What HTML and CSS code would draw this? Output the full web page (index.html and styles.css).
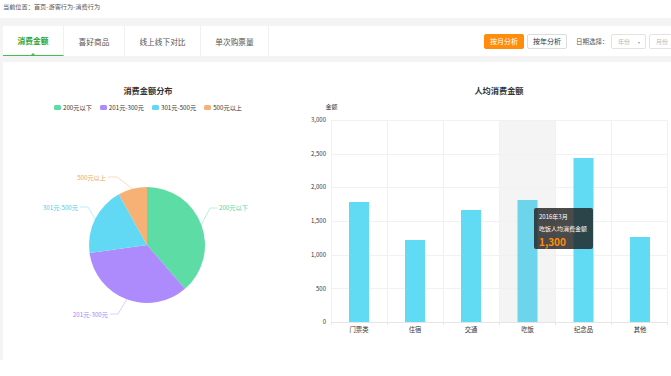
FILE: index.html
```html
<!DOCTYPE html>
<html lang="zh-CN">
<head>
<meta charset="utf-8">
<title>消费行为</title>
<link rel="stylesheet" href="styles.css">
</head>
<body>
<header class="crumb">当前位置：首页-游客行为-消费行为</header>
<div class="wrap">
  <div class="tabbar">
    <ul class="tabs">
      <li class="tab active">消费金额</li>
      <li class="tab w61">喜好商品</li>
      <li class="tab w76">线上线下对比</li>
      <li class="tab w68">单次购票量</li>
    </ul>
    <div class="tools">
      <button class="btn btn-primary">按月分析</button>
      <button class="btn">按年分析</button>
      <span class="date-label">日期选择：</span>
      <span class="select">年份<i class="caret"></i></span>
      <span class="select">月份</span>
    </div>
  </div>
  <div class="panel">
    <section class="pie-col">
      <h2 class="chart-title">消费金额分布</h2>
      <ul class="legend">
        <li><i class="sw green"></i>200元以下</li>
        <li><i class="sw purple"></i>201元-300元</li>
        <li><i class="sw cyan"></i>301元-500元</li>
        <li><i class="sw orange"></i>500元以上</li>
      </ul>
      <svg class="pie" width="290" height="247" viewBox="0 0 290 247">
        <path d="M144,132 L144,74 A58,58 0 0 1 182.05,175.77 Z" fill="#5ddca6"/>
        <path d="M144,132 L182.05,175.77 A58,58 0 0 1 86.56,140.07 Z" fill="#ae8bfc"/>
        <path d="M144,132 L86.56,140.07 A58,58 0 0 1 115.88,81.27 Z" fill="#62d9f4"/>
        <path d="M144,132 L115.88,81.27 A58,58 0 0 1 144,74 Z" fill="#f8b174"/>
        <g fill="none" stroke-width="0.8">
          <polyline points="198.3,111.7 207,95 214,95" stroke="#a8ecd0"/>
          <polyline points="123.7,186.3 115,201 107,201" stroke="#d3c1fd"/>
          <polyline points="92.1,106.1 85,94 77,94" stroke="#a9ebf8"/>
          <polyline points="129.5,75.9 114,64 105,64" stroke="#fbd2ae"/>
        </g>
        <g class="pie-label">
          <text x="216" y="97" fill="#4fd69c">200元以下</text>
          <text x="105" y="203.5" fill="#a27ffa" text-anchor="end">201元-300元</text>
          <text x="75" y="96.5" fill="#45cbe8" text-anchor="end">301元-500元</text>
          <text x="103" y="66.5" fill="#f2a660" text-anchor="end">500元以上</text>
        </g>
      </svg>
    </section>
    <section class="bar-col">
      <h2 class="chart-title shift">人均消费金额</h2>
      <svg class="bars" width="378" height="259" viewBox="0 0 378 259">
        <rect x="206.5" y="19" width="56.2" height="202" fill="#f4f4f4"/>
        <g stroke="#f1f1f1" stroke-width="1">
          <line x1="38" y1="19.5" x2="375" y2="19.5"/>
          <line x1="38" y1="53.5" x2="375" y2="53.5"/>
          <line x1="38" y1="86.5" x2="375" y2="86.5"/>
          <line x1="38" y1="120.5" x2="375" y2="120.5"/>
          <line x1="38" y1="154.5" x2="375" y2="154.5"/>
          <line x1="38" y1="187.5" x2="375" y2="187.5"/>
          <line x1="38.5" y1="19" x2="38.5" y2="221"/>
          <line x1="94.5" y1="19" x2="94.5" y2="221"/>
          <line x1="150.5" y1="19" x2="150.5" y2="221"/>
          <line x1="206.5" y1="19" x2="206.5" y2="221"/>
          <line x1="262.5" y1="19" x2="262.5" y2="221"/>
          <line x1="318.5" y1="19" x2="318.5" y2="221"/>
          <line x1="374.5" y1="19" x2="374.5" y2="221"/>
        </g>
        <g fill="#61daf4">
          <rect x="56" y="101" width="20" height="120"/>
          <rect x="112" y="139" width="20" height="82"/>
          <rect x="168" y="109" width="20" height="112"/>
          <rect x="224.5" y="99" width="20" height="122" fill="#6cd5ec"/>
          <rect x="280.5" y="57" width="20" height="164"/>
          <rect x="337" y="136" width="20" height="85"/>
        </g>
        <g stroke="#e6e6e6" stroke-width="1">
          <line x1="38" y1="221.5" x2="375" y2="221.5"/>
          <line x1="38.5" y1="221" x2="38.5" y2="224"/>
          <line x1="94.5" y1="221" x2="94.5" y2="224"/>
          <line x1="150.5" y1="221" x2="150.5" y2="224"/>
          <line x1="206.5" y1="221" x2="206.5" y2="224"/>
          <line x1="262.5" y1="221" x2="262.5" y2="224"/>
          <line x1="318.5" y1="221" x2="318.5" y2="224"/>
          <line x1="374.5" y1="221" x2="374.5" y2="224"/>
        </g>
        <text class="axis-name" x="38.5" y="8">金额</text>
        <g class="ylab" text-anchor="end">
          <text x="33" y="21">3,000</text>
          <text x="33" y="55">2,500</text>
          <text x="33" y="88">2,000</text>
          <text x="33" y="122">1,500</text>
          <text x="33" y="156">1,000</text>
          <text x="33" y="189.5">500</text>
          <text x="33" y="223">0</text>
        </g>
        <g class="xlab" text-anchor="middle">
          <text x="66" y="230.5">门票类</text>
          <text x="122" y="230.5">住宿</text>
          <text x="178" y="230.5">交通</text>
          <text x="234.5" y="230.5">吃饭</text>
          <text x="290.5" y="230.5">纪念品</text>
          <text x="347" y="230.5">其他</text>
        </g>
      </svg>
      <div class="tooltip">
        <div class="tip-line">2016年3月</div>
        <div class="tip-line">吃饭人均消费金额</div>
        <div class="tip-value">1,300</div>
      </div>
    </section>
  </div>
</div>
</body>
</html>
```

FILE: styles.css
```css
* { box-sizing: border-box; margin: 0; padding: 0; }
html, body { background: #fff; overflow: hidden; }
body {
  width: 671px;
  height: 376px;
  font-family: "Noto Sans CJK SC", "Noto Sans", sans-serif;
  color: #333;
}
.crumb {
  height: 18px;
  line-height: 14px;
  padding-left: 3px;
  font-size: 6.2px;
  color: #555;
}
.wrap {
  background: #f4f4f4;
  padding: 8px 0 0 3px;
  height: 342px;
  overflow: hidden;
}
.tabbar {
  height: 30px;
  background: #fff;
  display: flex;
  align-items: stretch;
}
.tabs {
  list-style: none;
  display: flex;
}
.tab {
  width: 61px;
  border-right: 1px solid #f0f0f0;
  display: flex;
  align-items: center;
  justify-content: center;
  font-size: 7.7px;
  color: #555;
  position: relative;
}
.tab.w76 { width: 76px; }
.tab.w68 { width: 68px; }
.tab.active {
  color: #1ea535;
  font-weight: bold;
  border-bottom: 1px solid #45bb52;
}
.tab.active::after {
  content: "";
  position: absolute;
  left: 50%;
  bottom: 0;
  margin-left: -2px;
  border-left: 2px solid transparent;
  border-right: 2px solid transparent;
  border-bottom: 2px solid #45bb52;
}
.tools {
  margin-left: auto;
  margin-right: -16px;
  display: flex;
  align-items: center;
  flex-shrink: 0;
}
.btn {
  width: 40px;
  height: 15px;
  border: 1px solid #dcdcdc;
  background: #fff;
  border-radius: 2px;
  font-family: inherit;
  font-size: 7px;
  color: #333;
  margin-right: 3px;
}
.btn-primary {
  background: #ff8d0b;
  border-color: #ff8d0b;
  color: #fff;
}
.date-label {
  margin-left: 6px;
  font-size: 6.5px;
  color: #555;
  width: 35px;
}
.select {
  width: 35px;
  height: 15px;
  border: 1px solid #e3e3e3;
  border-radius: 2px;
  margin-right: 3px;
  font-size: 6px;
  color: #b8b8b8;
  display: flex;
  align-items: center;
  padding-left: 6px;
  position: relative;
}
.caret {
  position: absolute;
  right: 5px;
  top: 7px;
  border-left: 1.5px solid transparent;
  border-right: 1.5px solid transparent;
  border-top: 2px solid #999;
}
.panel {
  margin-top: 6px;
  height: 298px;
  background: #fff;
  display: grid;
  grid-template-columns: 290px 1fr;
}
.pie-col, .bar-col {
  position: relative;
  padding-top: 22px;
}
.chart-title {
  font-size: 8.2px;
  line-height: 12px;
  font-weight: bold;
  color: #333;
  text-align: center;
}
.chart-title.shift { padding-left: 34px; }
.legend {
  list-style: none;
  margin-top: 5px;
  height: 12px;
  display: flex;
  justify-content: center;
  align-items: center;
  gap: 8px;
  font-size: 6.2px;
  color: #333;
}
.legend li { display: flex; align-items: center; gap: 2px; }
.sw { display: block; width: 7px; height: 5px; border-radius: 1.5px; }
.sw.green { background: #5ddca6; }
.sw.purple { background: #ae8bfc; }
.sw.cyan { background: #62d9f4; }
.sw.orange { background: #f8b174; }
.pie, .bars { display: block; }
.bars { margin-top: 5px; }
.pie-label text { font-size: 6.2px; }
.ylab text { font-size: 6px; fill: #333; }
.xlab text { font-size: 6.3px; fill: #333; }
.axis-name { font-size: 6px; fill: #333; text-anchor: middle; }
.tooltip {
  position: absolute;
  left: 241px;
  top: 146px;
  width: 59px;
  height: 41px;
  background: rgba(30, 30, 30, 0.8);
  border-radius: 2px;
  padding: 3px 5px;
  color: #fff;
}
.tip-line { font-size: 6px; line-height: 12px; }
.tip-value {
  font-size: 10px;
  line-height: 13px;
  font-weight: bold;
  color: #ff8d0b;
}
```
